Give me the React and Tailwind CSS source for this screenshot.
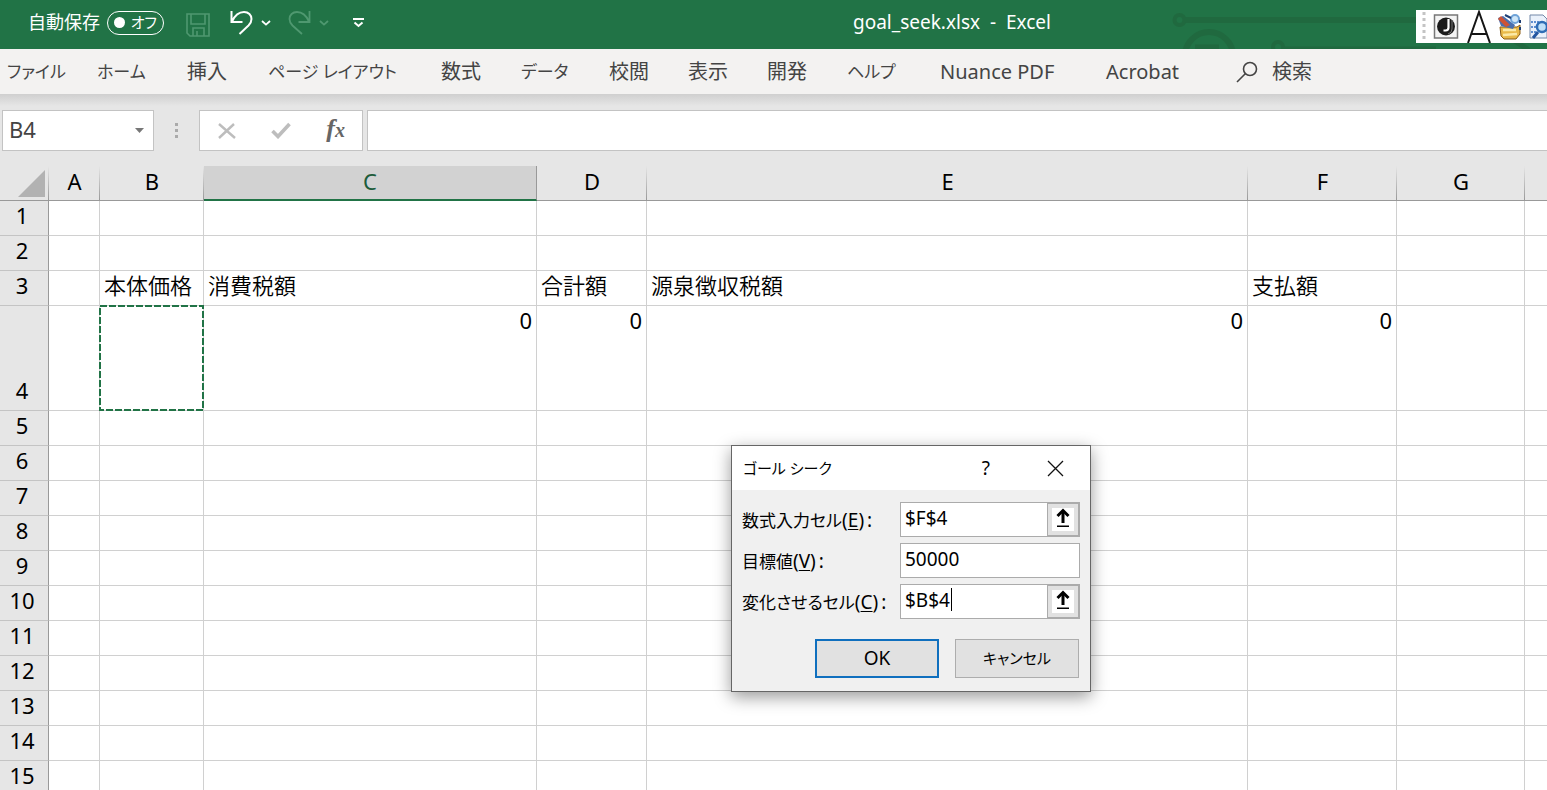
import { useState } from "react";
import clsx from "clsx";

const TABS = [
  { label: "ファイル", width: "w-[90px]", kana: true },
  { label: "ホーム", width: "w-[90px]", kana: true },
  { label: "挿入", width: "w-[81px]" },
  { label: "ページ レイアウト", width: "w-[173px]", kana: true },
  { label: "数式", width: "w-[80px]" },
  { label: "データ", width: "w-[88px]", kana: true },
  { label: "校閲", width: "w-[79px]" },
  { label: "表示", width: "w-[79px]" },
  { label: "開発", width: "w-[80px]" },
  { label: "ヘルプ", width: "w-[93px]", kana: true },
  { label: "Nuance PDF", width: "w-[166px]" },
  { label: "Acrobat", width: "w-[130px]" },
];

const COLUMNS = [
  { id: "A", width: "w-[51px]" },
  { id: "B", width: "w-[104px]" },
  { id: "C", width: "w-[333px]" },
  { id: "D", width: "w-[110px]" },
  { id: "E", width: "w-[601px]" },
  { id: "F", width: "w-[149px]" },
  { id: "G", width: "w-[128px]" },
  { id: "", width: "w-auto" },
];

const ROWS = Array.from({ length: 15 }, (_, i) => i + 1);

const CELLS = {
  B3: "本体価格",
  C3: "消費税額",
  D3: "合計額",
  E3: "源泉徴収税額",
  F3: "支払額",
  C4: 0,
  D4: 0,
  E4: 0,
  F4: 0,
};

function Chevron({ className }) {
  return (
    <svg width="10" height="6" viewBox="0 0 10 6" fill="none" stroke="currentColor" strokeWidth="1.8" className={className}>
      <path d="M1 1l4 3.6L9 1" />
    </svg>
  );
}

function Circuit() {
  return (
    <svg width="380" height="49" viewBox="0 0 380 49" fill="none" stroke="#20693f" className="absolute right-0 top-0">
      <circle cx="12.500" cy="20" r="5" strokeWidth="4" />
      <path d="M19 20h361" strokeWidth="6" />
      <circle cx="42" cy="56" r="24" strokeWidth="6" />
      <path d="M28 47h24" strokeWidth="5" />
      <circle cx="111" cy="47" r="5" strokeWidth="4" />
      <path d="M117 49h152" strokeWidth="5" />
      <path d="M346 40l16 10" strokeWidth="5" />
    </svg>
  );
}

function LanguageBar() {
  return (
    <div className="absolute right-0 top-[10px] flex h-[33px] w-[131px] items-center overflow-hidden bg-white">
      <svg width="131" height="33" viewBox="0 0 131 33">
        <path d="M8 2v30" stroke="#c4c4c4" strokeWidth="3" strokeDasharray="3 3" />
        {/* input style */}
        <rect x="18.500" y="5" width="23" height="23" fill="#f4f4f4" stroke="#777" strokeWidth="1.500" />
        <circle cx="30" cy="16.500" r="9" fill="#1b1b1b" />
        <path d="M32.500 9v8.500q0 3-3 3h-2" fill="none" stroke="#fff" strokeWidth="2.200" />
        <path d="M36 10v9q0 4-4 5" fill="none" stroke="#777" strokeWidth="1" />
        {/* input mode */}
        <path d="M52 33L63 2l11 31M55.500 24h15" fill="none" stroke="#151515" strokeWidth="2" />
        {/* tool box */}
        <path d="M84 17h17l3-2v9l-4 5H88l-3-3z" fill="#e9b949" stroke="#8a5c16" />
        <path d="M87 20h13M87 25l14-1" stroke="#fbe9a6" strokeWidth="2.500" />
        <path d="M82 8l5-2 12 9-2 4-12-3z" fill="#4a6fae" />
        <path d="M82 9l3-3 9 9-4 2z" fill="#cf5335" />
        <circle cx="99" cy="9" r="4" fill="#cfe6f8" stroke="#6fa3d8" strokeWidth="2" />
        <path d="M89 5l6 3M104 10v3M104 17v3" stroke="#1f3f75" strokeWidth="2" />
        {/* dictionary search */}
        <path d="M114 5h13l4 4v19h-17z" fill="#eaf1fb" stroke="#7288a8" />
        <path d="M115 12h8M115 17h6M115 22h6" stroke="#5f8fd0" strokeWidth="2" strokeDasharray="2 1" />
        <circle cx="126" cy="17" r="5" fill="#bfe0f8" stroke="#2f6db5" strokeWidth="2.500" />
        <path d="M122 22l-5 6" stroke="#2456a0" strokeWidth="3" />
      </svg>
    </div>
  );
}

function TitleBar() {
  return (
    <header className="relative flex h-[49px] shrink-0 items-center overflow-hidden bg-[#217346] pb-1 text-white">
      <Circuit />
      <label htmlFor="autosave" className="ml-7 w-[79px] text-[18px]">自動保存</label>
      <button id="autosave" role="switch" aria-checked="false"
        className="flex h-6 w-[57px] items-center justify-between rounded-full border border-white px-[6px] text-[15px] leading-none">
        <span className="size-[11px] rounded-full bg-white" />
        <span className="[font-feature-settings:'palt']">オフ</span>
      </button>
      <button aria-label="保存" className="ml-[22px] pt-1 text-[#4f9870]">
        <svg width="24" height="24" viewBox="0 0 24 24" fill="none" stroke="currentColor" strokeWidth="1.600">
          <path d="M1 1h22v22H4l-3-3zM5 1v10h14V1M7 23v-8h11v8M11 18v5" />
        </svg>
      </button>
      <button aria-label="元に戻す" className="ml-5 flex items-center gap-2">
        <svg width="23" height="26" viewBox="0 0 23 26" fill="none" stroke="currentColor" strokeWidth="2">
          <path d="M1.500 1v11h11M2 11.500C5 5 10 2 14 2c4.500 0 7.500 3 7.500 7 0 3-1 4.500-3 6.500L9.500 24" />
        </svg>
        <Chevron />
      </button>
      <button aria-label="やり直し" className="ml-[17px] flex items-center gap-2 text-[#4f9870]">
        <svg width="23" height="26" viewBox="0 0 23 26" fill="none" stroke="currentColor" strokeWidth="1.800">
          <path d="M21.500 1v11h-11M21 11.500C18 5 13 2 9 2 4.500 2 1.500 5 1.500 9c0 3 1 4.500 3 6.500L14 24" />
        </svg>
        <Chevron />
      </button>
      <button aria-label="クイック アクセス ツール バーのユーザー設定" className="ml-6">
        <svg width="11" height="10" viewBox="0 0 11 10" fill="none" stroke="currentColor" strokeWidth="2">
          <path d="M0 1h11M1.500 4.500l4 3.500 4-3.500" />
        </svg>
      </button>
      <h1 className="ml-[489px] whitespace-pre text-[19px]">goal_seek.xlsx  -  Excel</h1>
      <LanguageBar />
    </header>
  );
}

function Ribbon() {
  return (
    <nav className="flex h-[45px] shrink-0 items-center bg-[#f3f2f1] pl-[7px] text-[20px] text-[#444]">
      {TABS.map((tab) => (
        <button key={tab.label}
          className={clsx("shrink-0 whitespace-nowrap text-left [font-feature-settings:'palt']", tab.width, tab.kana && "text-[17px]")}>
          {tab.label}
        </button>
      ))}
      <button className="flex shrink-0 items-center gap-[14px]">
        <svg width="22" height="22" viewBox="0 0 22 22" fill="none" stroke="currentColor" strokeWidth="1.600">
          <circle cx="14" cy="8" r="6.500" />
          <path d="M9.500 12.500L1 21" />
        </svg>
        検索
      </button>
    </nav>
  );
}

function FormulaBar() {
  return (
    <div className="flex h-[72px] shrink-0 items-start bg-[linear-gradient(to_bottom,#cfcfcf,#e6e6e6_12px)] pl-[2px] pt-4">
      <div className="flex h-[41px] w-[152px] items-center border border-[#c3c3c3] bg-white pr-[9px]">
        <input aria-label="名前ボックス" defaultValue="B4" className="min-w-0 flex-1 pb-[2px] pl-[6px] text-[22px] text-[#444] outline-none" />
        <svg width="9" height="5" viewBox="0 0 9 5" fill="#777"><path d="M0 0h9L4.500 5z" /></svg>
      </div>
      <div className="flex h-[41px] w-[45px] flex-col items-center justify-center gap-[3px]">
        <span className="size-[3px] bg-[#aaa]" />
        <span className="size-[3px] bg-[#aaa]" />
        <span className="size-[3px] bg-[#aaa]" />
      </div>
      <div className="flex h-[41px] w-[164px] items-center justify-between border border-[#c3c3c3] bg-white pl-[18px] pr-[17px]">
        <button aria-label="キャンセル">
          <svg width="18" height="16" viewBox="0 0 18 16" fill="none" stroke="#bdbdbd" strokeWidth="2.400"><path d="M1 1l16 14M16 1L1 15" /></svg>
        </button>
        <button aria-label="入力">
          <svg width="20" height="17" viewBox="0 0 20 17" fill="none" stroke="#bdbdbd" strokeWidth="3.600"><path d="M1.500 9l5.500 5.500L18.500 2" /></svg>
        </button>
        <button aria-label="関数の挿入" className="pb-1 font-['Liberation_Serif',serif] text-[26px] font-bold italic leading-none text-[#666]">
          f<span className="text-[20px]">x</span>
        </button>
      </div>
      <input aria-label="数式バー" className="ml-1 h-[41px] min-w-0 flex-1 border border-r-0 border-[#c3c3c3] bg-white px-2 text-[22px] outline-none" />
    </div>
  );
}

function Marquee() {
  return (
    <svg width="105" height="106" viewBox="0 0 105 106" className="absolute -left-px -top-px z-10 max-w-none">
      <rect x="1" y="1" width="103" height="104" fill="none" stroke="#217346" strokeWidth="2" strokeDasharray="7 2" />
    </svg>
  );
}

function Sheet() {
  return (
    <table className="w-full table-fixed border-separate border-spacing-0 text-[22px] leading-[28px] text-black">
      <thead>
        <tr className="h-[35px] bg-[#e6e6e6]">
          <th className="w-[49px] border-b border-[#999] bg-[linear-gradient(to_top,#999,#e6e6e6)] bg-[length:1px_100%] bg-right bg-no-repeat p-0">
            <svg width="27" height="27" viewBox="0 0 27 27" fill="#b2b2b2" className="ml-[18px]"><path d="M27 0v27H0z" /></svg>
          </th>
          {COLUMNS.map((col) => (
            <th key={col.id} scope="col"
              className={clsx("p-0 pb-1 font-normal last:bg-none", col.width,
                col.id === "C"
                  ? "border-b-2 border-r border-b-[#217346] border-r-[#999] bg-[#d2d2d2] text-[#1e5c3a]"
                  : "border-b border-[#999] bg-[linear-gradient(to_top,#999,#e6e6e6)] bg-[length:1px_100%] bg-right bg-no-repeat")}>
              {col.id}
            </th>
          ))}
        </tr>
      </thead>
      <tbody>
        {ROWS.map((row) => (
          <tr key={row} className={row === 4 ? "h-[105px]" : "h-[35px]"}>
            <th scope="row" className="border-b border-r border-b-[#c4c4c4] border-r-[#999] bg-[#e6e6e6] p-0 pb-[6px] pr-1 align-bottom font-normal">{row}</th>
            {COLUMNS.map((col) => {
              const value = CELLS[col.id + row];
              return (
                <td key={col.id}
                  className={clsx("relative whitespace-nowrap border-b border-r border-[#d0d0d0] bg-white px-1 py-0 align-top last:border-r-0",
                    typeof value === "number" ? "text-right" : "font-[350]")}>
                  {value}
                  {col.id + row === "B4" && <Marquee />}
                </td>
              );
            })}
          </tr>
        ))}
      </tbody>
    </table>
  );
}

function Field({ id, label, accessKey, value, onChange, picker, caret }) {
  return (
    <div className="flex h-[35px] items-center">
      <label htmlFor={id} className="w-[158px] whitespace-nowrap pt-[2px] text-[17px] [font-feature-settings:'palt']">
        {label}
        <span className="text-[19px]">(<u className="underline-offset-2">{accessKey}</u>)</span>
        <span className="pl-[3px] text-[19px]">:</span>
      </label>
      <div className="relative flex h-full w-[180px] border border-[#ababab] bg-white">
        <input id={id} value={value} onChange={(e) => onChange(e.target.value)} className="min-w-0 flex-1 pb-[2px] pl-1 text-[19px] outline-none" />
        {caret && <span className="absolute left-[50px] top-[3px] h-[23px] w-px bg-black" />}
        {picker && (
          <button aria-label="セルを選択" className="flex w-8 items-center justify-center border border-[#ababab] bg-[#e1e1e1]">
            <svg width="22" height="23" viewBox="0 0 22 23">
              <path d="M0 0h22v23H0z" fill="#fff" />
              <path d="M5.500 8L11 2.500 16.500 8" fill="none" stroke="#000" strokeWidth="3" />
              <path d="M9.500 3h3v12h-3zM5 17.500h12V19H5z" />
            </svg>
          </button>
        )}
      </div>
    </div>
  );
}

function GoalSeekDialog() {
  const [formula, setFormula] = useState("$F$4");
  const [target, setTarget] = useState("50000");
  const [changing, setChanging] = useState("$B$4");

  return (
    <div role="dialog" aria-labelledby="goal-seek-title"
      className="absolute left-[731px] top-[445px] z-20 w-[360px] border border-[#666] bg-[#f0f0f0] text-[19px] text-black shadow-[0_5px_16px_rgba(0,0,0,0.4)]">
      <div className="flex h-11 items-center bg-white pl-[11px] pr-[26px]">
        <h2 id="goal-seek-title" className="flex-1 text-[15px] [font-feature-settings:'palt']">ゴール シーク</h2>
        <button aria-label="ヘルプ" className="mr-[57px]">?</button>
        <button aria-label="閉じる">
          <svg width="17" height="17" viewBox="0 0 17 17" fill="none" stroke="#111" strokeWidth="1.300"><path d="M1 1l15 15M16 1L1 16" /></svg>
        </button>
      </div>
      <div className="flex flex-col gap-[6px] px-[10px] pt-3">
        <Field id="set-cell" label="数式入力セル" accessKey="E" value={formula} onChange={setFormula} picker />
        <Field id="to-value" label="目標値" accessKey="V" value={target} onChange={setTarget} />
        <Field id="changing-cell" label="変化させるセル" accessKey="C" value={changing} onChange={setChanging} picker caret />
      </div>
      <div className="flex justify-end gap-4 pb-[13px] pr-[11px] pt-5">
        <button className="h-[39px] w-[124px] border-2 border-[#0f6fbe] bg-[#e1e1e1]">OK</button>
        <button className="h-[39px] w-[124px] border border-[#adadad] bg-[#e1e1e1] text-[15px] [font-feature-settings:'palt']">キャンセル</button>
      </div>
    </div>
  );
}

export default function App() {
  return (
    <div className="relative flex h-screen flex-col overflow-hidden bg-white font-['Noto_Sans','Noto_Sans_CJK_JP',sans-serif]">
      <TitleBar />
      <Ribbon />
      <FormulaBar />
      <Sheet />
      <GoalSeekDialog />
    </div>
  );
}
